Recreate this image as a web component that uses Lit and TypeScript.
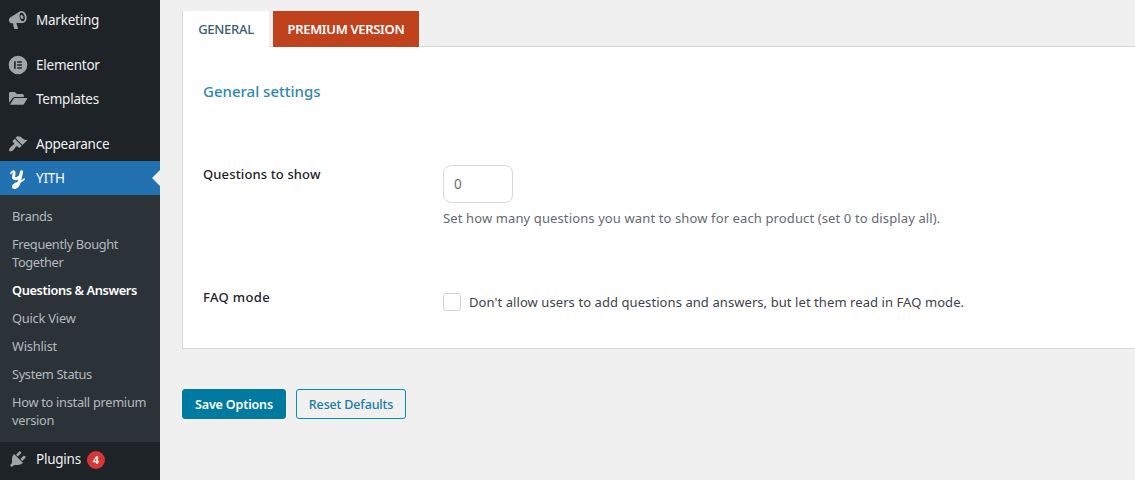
import { LitElement, html, css, svg } from "lit";
import { customElement } from "lit/decorators.js";

const icons: Record<string, unknown> = {
  megaphone: svg`<path fill-rule="evenodd" d="M1.3 11.8c-.6-1.5-.4-3.4.8-4.200L10.6 2.200C11.500 1.500 12.500 1 13.600 1c2.300 0 4.300 2.200 4.900 5 .6 3.100-.5 6.100-2.700 6.700-.6.2-1.200.2-1.800.2L8.300 13.100 10 18.500c.1.3-.1.600-.4.600H6.700c-.3 0-.5-.2-.6-.5L4.900 13.300c-1.700.2-3-.2-3.600-1.500zM15.200 11.300c1.500-.4 2-2.500 1.500-4.700S14.700 2.400 13.200 2.800s-2 2.400-1.500 4.600 2 4.300 3.500 3.900zM13.300 5c.9-.2 1.700.6 2 1.700s0 2-.9 2.300c-.9.200-1.600-.6-1.900-1.700s0-2.100.8-2.300z"/>`,
  elementor: svg`<path fill-rule="evenodd" d="M10 .7a9.300 9.300 0 1 0 0 18.600A9.300 9.300 0 0 0 10 .7zM6.100 6.200h1.600v7.600H6.100zM9.200 6.200h4.700v1.500H9.200zM9.200 9.200h4.700v1.500H9.200zM9.200 12.300h4.700v1.500H9.200z"/>`,
  folder: svg`<path d="M1 13.800V4.500C1 3.600 1.600 3 2.500 3h4.300l2 2h5.500c.9 0 1.500.6 1.500 1.500V8H6.600c-.8 0-1.500.4-1.900 1.100zM2 15.800l3.600-6.100c.3-.5.6-.7 1.100-.7h11.800c.5 0 .7.5.5.9l-3 5.200c-.3.5-.7.7-1.200.7z"/>`,
  appearance: svg`<path d="M14.480 11.060L7.410 3.990l1.500-1.500c.5-.56 2.300-.47 3.510.32 1.210.8 1.430 1.280 2.910 2.100 1.180.64 2.450 1.260 4.450.85zm-.71.71L6.700 4.700 4.930 6.470c-.39.39-.39 1.020 0 1.410l1.060 1.060c.39.39.39 1.030 0 1.420-.6.6-1.430 1.110-2.210 1.690-.35.26-.7.53-1.010.84C1.430 14.230.4 16.080 1.400 17.070c.99 1 2.840-.03 4.180-1.360.31-.31.58-.66.85-1.020.57-.78 1.080-1.610 1.690-2.210.39-.39 1.020-.39 1.410 0l1.060 1.060c.39.39 1.020.39 1.410 0z"/>`,
  yith: svg`<g fill="none" stroke="currentColor" stroke-linecap="round" stroke-linejoin="round"><path stroke-width="1.600" d="M2.900 5.300c.5-1.300 1.500-2.200 2.700-2M7.500 15.600c3.500-1 6.500-2 8.700-4.600"/><path stroke-width="3" d="M5.900 4.100c.8 1.600-.9 4-.2 5.800.7 1.500 3.600 1.200 5.400-.9"/><path stroke-width="3.200" d="M13.500 3.900c-.8 3.200-1.200 6.200-2.200 9.600-.9 3.200-2.500 5.300-4.200 5.700"/><path stroke-width="2.200" d="M7.200 19.700c-1.900.5-2.700-.9-1.700-2.300.6-.8 1.400-1.300 2.400-1.700"/></g>`,
  plugins: svg`<path d="M13.110 4.360L9.870 7.600 8 5.730l3.240-3.240c.35-.34 1.050-.2 1.560.32.52.51.66 1.210.31 1.550zm-8 1.770l.91-1.120 9.010 9.010-1.190.84c-.71.71-2.630 1.160-3.820 1.160H6.140L4.900 17.260c-.59.59-1.540.59-2.120 0-.59-.58-.59-1.530 0-2.120l1.240-1.240v-3.880c0-1.130.4-3.190 1.090-3.890zm7.260 3.970l3.240-3.240c.34-.35 1.040-.21 1.550.31.52.51.66 1.210.31 1.550l-3.240 3.250z"/>`,
};

@customElement("admin-menu")
class AdminMenu extends LitElement {
  static styles = css`
    :host { display: block; box-sizing: border-box; width: 160px; height: 480px; padding-top: 3px; background: #1d2327; color: #f0f0f1; overflow: hidden; }
    .item { display: flex; align-items: center; gap: 8px; height: 34px; padding-left: 8px; font-size: 13.5px; letter-spacing: -0.24px; position: relative; }
    .item svg { width: 20px; height: 20px; fill: currentColor; color: #a0a5aa; flex: none; overflow: visible; }
    .item .text { line-height: 18px; }
    .gap { margin-top: 11px; }
    .current { background: #2271b1; color: #fff; }
    .current svg { color: #fff; }
    .current::after { content: ""; position: absolute; right: 0; top: 9px; border: 8px solid transparent; border-left: 0; border-right-color: #f0f0f0; }
    .submenu { box-sizing: border-box; height: 247px; padding: 7px 12px; background: #2c3338; color: #b4b9be; font-size: 12.8px; line-height: 18px; letter-spacing: -0.34px; }
    .sub { padding: 5px 0; white-space: nowrap; }
    .active { color: #fff; font-weight: 600; letter-spacing: -0.4px; }
    .wide { letter-spacing: -0.2px; }
    .long { letter-spacing: -0.28px; }
    .badge { display: grid; place-items: center; width: 18px; height: 18px; margin: 2px 0 0 -2px; border-radius: 9px; background: #d63638; color: #fff; font-size: 11px; line-height: 18px; font-weight: 600; letter-spacing: 0; }
  `;
  item(icon: string, label: string, cls = "", badge = "") {
    return html`<div class="item ${cls}"><svg viewBox="0 0 20 20">${icons[icon]}</svg><span class="text">${label}</span>${badge ? html`<span class="badge">${badge}</span>` : ""}</div>`;
  }
  render() {
    return html`
      ${this.item("megaphone", "Marketing")}
      ${this.item("elementor", "Elementor", "gap")}
      ${this.item("folder", "Templates")}
      ${this.item("appearance", "Appearance", "gap")}
      ${this.item("yith", "YITH", "current")}
      <div class="submenu">
        <div class="sub">Brands</div>
        <div class="sub">Frequently Bought<br />Together</div>
        <div class="sub active">Questions &amp; Answers</div>
        <div class="sub wide">Quick View</div>
        <div class="sub wide">Wishlist</div>
        <div class="sub">System Status</div>
        <div class="sub long">How to install premium<br />version</div>
      </div>
      ${this.item("plugins", "Plugins", "", "4")}
    `;
  }
}

@customElement("app-root")
class AppRoot extends LitElement {
  static styles = css`
    :host { display: flex; height: 480px; overflow: hidden; background: #f0f0f0; font-family: "Noto Sans", "Open Sans", sans-serif; }
    main { flex: 1; min-width: 0; padding: 11px 0 0 22px; white-space: nowrap; }
    .tabs { display: flex; gap: 4px; height: 36px; font-size: 13px; line-height: 36px; font-weight: 600; position: relative; z-index: 1; }
    .tab { box-sizing: border-box; text-align: center; }
    .general { width: 87px; background: #fff; border-left: 1px solid #d8d8d8; color: #3c5d75; font-weight: 500; letter-spacing: -0.3px; }
    .premium { width: 146px; background: #c0421c; color: #fff; letter-spacing: -0.34px; }
    .panel { box-sizing: border-box; height: 303px; margin-top: -1px; padding: 32px 20px 0; background: #fff; border: 1px solid #d8d8d8; border-right: 0; }
    h3 { margin: 0; color: #2f87ad; font-size: 15px; line-height: 24px; font-weight: 500; }
    .row { display: grid; grid-template-columns: 240px 1fr; font-size: 13px; }
    .questions { margin-top: 62px; }
    .faq { margin-top: 59px; }
    .label { font-weight: 500; color: #1d2327; line-height: 20px; letter-spacing: 0.13px; }
    .questions .label { line-height: 18px; }
    .faq .label { letter-spacing: 0.35px; }
    .number { box-sizing: border-box; width: 70px; height: 38px; border: 1px solid #d8d8d8; border-radius: 8px; padding-left: 10px; font-size: 13.5px; line-height: 36px; color: #6b6b6b; }
    .desc { margin-top: 5px; line-height: 20px; color: #646970; letter-spacing: 0.118px; }
    .check { display: flex; align-items: center; gap: 8px; height: 20px; padding-top: 5px; color: #3c434a; letter-spacing: 0.075px; }
    .box { box-sizing: border-box; width: 18px; height: 18px; border: 1px solid #d0d0d0; border-radius: 3px; }
    .actions { display: flex; gap: 10px; margin-top: 40px; font-size: 12.5px; letter-spacing: -0.15px; }
    .btn { box-sizing: border-box; height: 30px; border: 1px solid #007a9f; border-radius: 3px; text-align: center; line-height: 29px; }
    .save { width: 104px; background: #007a9f; color: #fff; font-weight: 600; }
    .reset { width: 110px; border-color: #0090bd; color: #187aa5; font-weight: 500; }
  `;
  render() {
    return html`
      <admin-menu></admin-menu>
      <main>
        <div class="tabs"><div class="tab general">GENERAL</div><div class="tab premium">PREMIUM VERSION</div></div>
        <section class="panel">
          <h3>General settings</h3>
          <div class="row questions">
            <div class="label">Questions to show</div>
            <div><div class="number">0</div><div class="desc">Set how many questions you want to show for each product (set 0 to display all).</div></div>
          </div>
          <div class="row faq">
            <div class="label">FAQ mode</div>
            <div class="check"><div class="box"></div><span>Don't allow users to add questions and answers, but let them read in FAQ mode.</span></div>
          </div>
        </section>
        <div class="actions"><div class="btn save">Save Options</div><div class="btn reset">Reset Defaults</div></div>
      </main>
    `;
  }
}
